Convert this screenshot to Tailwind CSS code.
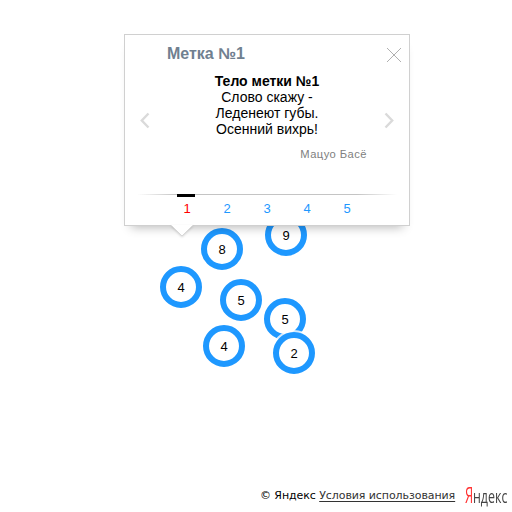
<!DOCTYPE html>
<html lang="ru">
<head>
<meta charset="utf-8">
<title>Карта</title>
<script src="https://cdn.jsdelivr.net/npm/@tailwindcss/browser@4"></script>
</head>
<body class="bg-white">
<main class="relative flex h-[512px] w-[512px] flex-col justify-end overflow-hidden font-['Liberation_Sans',Arial,sans-serif] text-black">

  <!-- Clusters on the map -->
  <div class="absolute left-[265px] top-[214px] flex size-[42px] items-center justify-center rounded-full border-6 border-[#1e98ff] bg-white pt-0.5 text-[13px] ring-2 ring-white/80">9</div>
  <div class="absolute left-[201px] top-[228px] flex size-[42px] items-center justify-center rounded-full border-6 border-[#1e98ff] bg-white pt-0.5 text-[13px] ring-2 ring-white/80">8</div>
  <div class="absolute left-[160px] top-[266px] flex size-[42px] items-center justify-center rounded-full border-6 border-[#1e98ff] bg-white pt-0.5 text-[13px] ring-2 ring-white/80">4</div>
  <div class="absolute left-[220px] top-[279px] flex size-[42px] items-center justify-center rounded-full border-6 border-[#1e98ff] bg-white pt-0.5 text-[13px] ring-2 ring-white/80">5</div>
  <div class="absolute left-[264px] top-[298px] flex size-[42px] items-center justify-center rounded-full border-6 border-[#1e98ff] bg-white pt-0.5 text-[13px] ring-2 ring-white/80">5</div>
  <div class="absolute left-[203px] top-[325px] flex size-[42px] items-center justify-center rounded-full border-6 border-[#1e98ff] bg-white pt-0.5 text-[13px] ring-2 ring-white/80">4</div>
  <div class="absolute left-[273px] top-[332px] flex size-[42px] items-center justify-center rounded-full border-6 border-[#1e98ff] bg-white pt-0.5 text-[13px] ring-2 ring-white/80">2</div>

  <!-- Balloon -->
  <section class="absolute left-[124px] top-[34px] flex h-[192px] w-[286px] flex-col border border-[#d0d0d0] bg-white shadow-[0_8px_10px_-7px_rgba(0,0,0,0.3)]">
    <header class="flex h-[38px] items-start justify-between pl-[42px] pr-[7px] pt-[10px]">
      <h1 class="text-base/[18px] font-bold text-[#708090]">Метка №1</h1>
      <svg class="mt-px size-4" viewBox="0 0 16 16" fill="none" stroke="#b0b0b0"><path d="M1 2L15 16M15 2L1 16"/></svg>
    </header>
    <div class="flex justify-between px-[14px]">
      <svg class="mt-[39px] h-[17px] w-3" viewBox="0 0 12 17" fill="none" stroke="#dadada" stroke-width="2.4"><path d="M9.5 1.5L2.8 8.5L9.5 15.5"/></svg>
      <div class="w-[200px] text-center text-sm/4">
        <h2 class="font-bold">Тело метки №1</h2>
        <p>Слово скажу -<br>Леденеют губы.<br>Осенний вихрь!</p>
        <p class="mt-[9px] text-right text-[11.2px]/4 tracking-[0.45px] text-[#808080]">Мацуо Басё</p>
      </div>
      <svg class="mt-[39px] h-[17px] w-3" viewBox="0 0 12 17" fill="none" stroke="#dadada" stroke-width="2.4"><path d="M2.5 1.5L9.2 8.5L2.5 15.5"/></svg>
    </div>
    <nav class="mx-3 mt-auto h-[31px]">
      <div class="h-px bg-linear-to-r from-transparent via-[#c4c4c4] from-0% via-15% to-[#c4c4c4] to-85%">
        <div class="ml-auto h-px w-10 bg-linear-to-r from-transparent to-white"></div>
      </div>
      <div class="relative -mt-px ml-10 h-[3px] w-[18px] bg-black"></div>
      <div class="ml-[30px] mt-[3px] grid w-[200px] grid-cols-5 text-center text-[13px]/[18px] text-[#1e98ff]">
        <span class="text-[#f00]">1</span><span>2</span><span>3</span><span>4</span><span>5</span>
      </div>
    </nav>
    <svg class="absolute left-[46px] top-[190px] h-[13px] w-[24px] drop-shadow-[0_1px_1px_rgba(0,0,0,0.15)]" viewBox="0 0 24 13"><path d="M0 0H22L11 11Z" fill="#fff"/><path d="M.5 .5L11 11L21.5 .5" fill="none" stroke="#d8d8d8"/></svg>
  </section>

  <footer class="flex h-8 items-center pl-[260px]">
    <p class="mt-px w-[196px] whitespace-nowrap font-['DejaVu_Sans',sans-serif] text-[11px] tracking-[-0.08px]">© Яндекс <a class="text-[#333] underline underline-offset-2">Условия использования</a></p>
    <div class="-mt-0.5 ml-[9px] flex h-8 w-[43px] items-baseline leading-8 font-['Open_Sans',sans-serif]">
      <span class="block w-2 origin-left scale-x-[.62] text-[21px] font-medium text-[#f33]">Я</span>
      <span class="block w-[35px] origin-left scale-x-[.69] text-[18px] font-medium text-[#444]">ндекс</span>
    </div>
  </footer>
</main>
</body>
</html>
